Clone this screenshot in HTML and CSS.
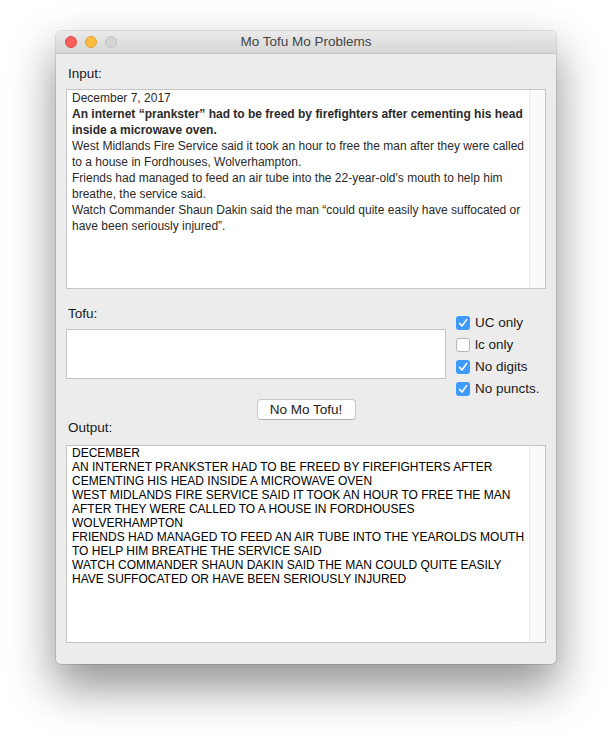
FILE: index.html
```html
<!DOCTYPE html>
<html>
<head>
<meta charset="utf-8">
<title>Mo Tofu Mo Problems</title>
<link rel="stylesheet" href="styles.css">
</head>
<body>
<div class="window">
  <div class="titlebar">
    <div class="lights">
      <span class="light red"></span>
      <span class="light yellow"></span>
      <span class="light gray"></span>
    </div>
    <div class="title">Mo Tofu Mo Problems</div>
  </div>
  <div class="content">
    <div class="label">Input:</div>
    <div class="box input-box">
      <div class="text input-text">
        <div>December 7, 2017</div>
        <div class="bold">An internet “prankster” had to be freed by firefighters after cementing his head<br>inside a microwave oven.</div>
        <div>West Midlands Fire Service said it took an hour to free the man after they were called<br>to a house in Fordhouses, Wolverhampton.</div>
        <div>Friends had managed to feed an air tube into the 22-year-old's mouth to help him<br>breathe, the service said.</div>
        <div>Watch Commander Shaun Dakin said the man “could quite easily have suffocated or<br>have been seriously injured”.</div>
      </div>
      <div class="scrolltrack"></div>
    </div>

    <div class="tofu-row">
      <div class="tofu-col">
        <div class="label tofu-label">Tofu:</div>
        <div class="box tofu-box"></div>
      </div>
      <div class="checks">
        <div class="check"><span class="cb on"><svg viewBox="0 0 14 14" width="14" height="14"><path d="M3.6 7.4 L6 10 L10.6 3.6" fill="none" stroke="#fff" stroke-width="1.6" stroke-linecap="round" stroke-linejoin="round"/></svg></span><span>UC only</span></div>
        <div class="check"><span class="cb"></span><span>lc only</span></div>
        <div class="check"><span class="cb on"><svg viewBox="0 0 14 14" width="14" height="14"><path d="M3.6 7.4 L6 10 L10.6 3.6" fill="none" stroke="#fff" stroke-width="1.6" stroke-linecap="round" stroke-linejoin="round"/></svg></span><span>No digits</span></div>
        <div class="check"><span class="cb on"><svg viewBox="0 0 14 14" width="14" height="14"><path d="M3.6 7.4 L6 10 L10.6 3.6" fill="none" stroke="#fff" stroke-width="1.6" stroke-linecap="round" stroke-linejoin="round"/></svg></span><span>No puncts.</span></div>
      </div>
    </div>

    <div class="button-row"><button class="btn">No Mo Tofu!</button></div>

    <div class="label out-label">Output:</div>
    <div class="box output-box">
      <div class="text output-text">
        <div>DECEMBER</div>
        <div>AN INTERNET PRANKSTER HAD TO BE FREED BY FIREFIGHTERS AFTER<br>CEMENTING HIS HEAD INSIDE A MICROWAVE OVEN</div>
        <div>WEST MIDLANDS FIRE SERVICE SAID IT TOOK AN HOUR TO FREE THE MAN<br>AFTER THEY WERE CALLED TO A HOUSE IN FORDHOUSES<br>WOLVERHAMPTON</div>
        <div>FRIENDS HAD MANAGED TO FEED AN AIR TUBE INTO THE YEAROLDS MOUTH<br>TO HELP HIM BREATHE THE SERVICE SAID</div>
        <div>WATCH COMMANDER SHAUN DAKIN SAID THE MAN COULD QUITE EASILY<br>HAVE SUFFOCATED OR HAVE BEEN SERIOUSLY INJURED</div>
      </div>
      <div class="scrolltrack"></div>
    </div>
  </div>
</div>
</body>
</html>
```

FILE: styles.css
```css
html, body {
  margin: 0;
  padding: 0;
  background: #ffffff;
}
html {
  height: 100%;
}
body {
  min-height: 100%;
  box-sizing: border-box;
  padding: 31px 0 0 56px;
  font-family: "Liberation Sans", Arial, sans-serif;
}
.window {
  width: 500px;
  height: 633px;
  box-sizing: border-box;
  background: #ececec;
  border-radius: 5px;
  box-shadow: 0 0 0 1px rgba(0,0,0,0.10), 0 22px 45px 2px rgba(0,0,0,0.42);
  overflow: hidden;
  display: flex;
  flex-direction: column;
}
.titlebar {
  height: 22px;
  flex: none;
  background: linear-gradient(#ebebeb, #d6d6d6);
  border-bottom: 1px solid #c4c4c4;
  display: flex;
  align-items: center;
  position: relative;
}
.lights {
  display: flex;
  gap: 8px;
  padding-left: 9px;
}
.light {
  width: 12px;
  height: 12px;
  border-radius: 50%;
  box-sizing: border-box;
}
.red { background: #fc605c; border: 0.5px solid #de4842; }
.yellow { background: #fdbc40; border: 0.5px solid #dea034; }
.gray { background: #d4d4d4; border: 0.5px solid #c3c3c3; }
.title {
  position: absolute;
  left: 0;
  right: 0;
  top: 0;
  line-height: 22px;
  text-align: center;
  font-size: 13.5px;
  color: #464646;
}
.content {
  padding: 12px 10px 0 10px;
  display: flex;
  flex-direction: column;
}
.label {
  font-size: 13.5px;
  line-height: 16px;
  height: 16px;
  color: #1a1a1a;
  padding-left: 2px;
  margin-bottom: 7px;
}
.box {
  background: #fff;
  border: 1px solid #c4c4c4;
  box-sizing: border-box;
  display: flex;
}
.text {
  flex: 1;
  white-space: nowrap;
  overflow: hidden;
}
.scrolltrack {
  width: 15px;
  flex: none;
  background: #fafafa;
  border-left: 1px solid #ebebeb;
}
.input-box {
  height: 200px;
}
.input-text {
  padding: 0 0 0 5px;
  font-size: 12px;
  line-height: 16px;
  color: #2a2a2a;
}
.bold { font-weight: bold; }

.tofu-row {
  display: flex;
  gap: 10px;
  margin-top: 17px;
}
.tofu-col {
  width: 380px;
}
.tofu-box {
  height: 50px;
}
.checks {
  padding-top: 10px;
  display: flex;
  flex-direction: column;
  gap: 8px;
}
.check {
  height: 14px;
  display: flex;
  align-items: center;
  gap: 5px;
  font-size: 13.5px;
  line-height: 14px;
  color: #1a1a1a;
}
.cb {
  width: 14px;
  height: 14px;
  box-sizing: border-box;
  border-radius: 3px;
  background: #fff;
  border: 1px solid #b5b5b5;
  display: block;
}
.cb.on {
  background: #3e9bfb;
  border: none;
}
.cb svg { display: block; }

.button-row {
  display: flex;
  justify-content: center;
  margin-top: 3px;
}
.btn {
  width: 99px;
  height: 21px;
  padding: 0;
  font-family: "Liberation Sans", Arial, sans-serif;
  font-size: 13.5px;
  color: #1a1a1a;
  background: #fff;
  border: 1px solid #c8c8c8;
  border-bottom-color: #b0b0b0;
  border-radius: 4px;
}
.out-label {
  margin-top: 0;
  margin-bottom: 9px;
}
.output-box {
  height: 198px;
}
.output-text {
  padding: 0 0 0 5px;
  font-size: 12px;
  line-height: 14px;
  color: #000;
}
```
